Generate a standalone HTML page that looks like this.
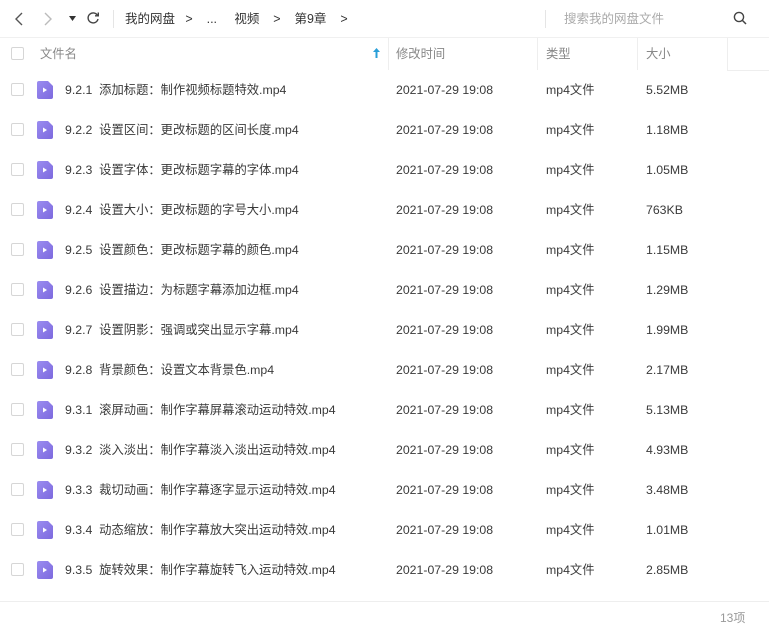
<!DOCTYPE html>
<html><head><meta charset="utf-8"><style>
*{margin:0;padding:0;box-sizing:border-box}
body{width:769px;height:634px;background:#fff;font-family:"Liberation Sans","Noto Sans CJK SC",sans-serif;color:#3a3a3a;position:relative;overflow:hidden;font-size:13px}
.a{position:absolute;white-space:nowrap;line-height:18px}
.cb{position:absolute;left:11px;width:13px;height:13px;border:1px solid #d6d6d6;border-radius:2px;background:#fff}
.ic{position:absolute;left:37px;width:16px;height:18px}
.hd{color:#888}
.sep{position:absolute;top:38px;width:1px;height:32px;background:#eee}
.fn{font-size:12.3px}
</style></head><body>
<svg class="a" style="left:13px;top:11px" width="12" height="16" viewBox="0 0 12 16"><path d="M9 2L3 8l6 6" stroke="#555" stroke-width="1.4" fill="none"/></svg>
<svg class="a" style="left:42px;top:11px" width="12" height="16" viewBox="0 0 12 16"><path d="M3 2l6 6-6 6" stroke="#bbb" stroke-width="1.4" fill="none"/></svg>
<svg class="a" style="left:69px;top:16px" width="8" height="6" viewBox="0 0 8 6"><path d="M0 0h7L3.5 5z" fill="#333"/></svg>
<svg class="a" style="left:86px;top:11px" width="14" height="14" viewBox="0 0 14 14"><path d="M11.5 4.5A5 5 0 1 0 12 8" stroke="#444" stroke-width="1.4" fill="none"/><path d="M9 4.8h3.3V1.5" stroke="#444" stroke-width="1.4" fill="none"/></svg>
<div class="a" style="left:113px;top:10px;width:1px;height:18px;background:#e5e5e5"></div>
<div class="a" style="left:125px;top:10px;color:#333;font-size:12.5px">我的网盘&nbsp;&nbsp;&nbsp;&gt;&nbsp;&nbsp;&nbsp;&nbsp;...&nbsp;&nbsp;&nbsp;&nbsp;&nbsp;视频&nbsp;&nbsp;&nbsp;&nbsp;&gt;&nbsp;&nbsp;&nbsp;&nbsp;第9章&nbsp;&nbsp;&nbsp;&nbsp;&gt;</div>
<div class="a" style="left:545px;top:10px;width:1px;height:18px;background:#e5e5e5"></div>
<div class="a" style="left:564px;top:10px;color:#aaa;font-size:12.5px">搜索我的网盘文件</div>
<svg class="a" style="left:733px;top:11px" width="15" height="15" viewBox="0 0 15 15"><circle cx="6" cy="6" r="4.6" stroke="#444" stroke-width="1.4" fill="none"/><path d="M9.5 9.5L13 13" stroke="#444" stroke-width="1.5"/></svg>
<div class="a" style="left:0;top:37px;width:769px;height:1px;background:#f0f0f0"></div>
<div class="cb" style="top:47px"></div>
<div class="a hd fn" style="left:40px;top:45px">文件名</div>
<svg class="a" style="left:372px;top:47px" width="9" height="12" viewBox="0 0 9 12"><path d="M4.5 1L1 5h2.5v6h2V5H8z" fill="#2a9fd8"/></svg>
<div class="sep" style="left:388px"></div>
<div class="a hd fn" style="left:396px;top:45px">修改时间</div>
<div class="sep" style="left:537px"></div>
<div class="a hd fn" style="left:546px;top:45px">类型</div>
<div class="sep" style="left:637px"></div>
<div class="a hd fn" style="left:646px;top:45px">大小</div>
<div class="sep" style="left:727px"></div>
<div class="a" style="left:727px;top:70px;width:42px;height:1px;background:#eee"></div>
<div id="rows"></div>
<div class="a" style="left:0;top:601px;width:769px;height:1px;background:#eee"></div>
<div class="a" style="left:720px;top:609px;color:#999;font-size:12px">13项</div>
<script>
var d=[["9.2.1  添加标题：制作视频标题特效.mp4","5.52MB"],["9.2.2  设置区间：更改标题的区间长度.mp4","1.18MB"],["9.2.3  设置字体：更改标题字幕的字体.mp4","1.05MB"],["9.2.4  设置大小：更改标题的字号大小.mp4","763KB"],["9.2.5  设置颜色：更改标题字幕的颜色.mp4","1.15MB"],["9.2.6  设置描边：为标题字幕添加边框.mp4","1.29MB"],["9.2.7  设置阴影：强调或突出显示字幕.mp4","1.99MB"],["9.2.8  背景颜色：设置文本背景色.mp4","2.17MB"],["9.3.1  滚屏动画：制作字幕屏幕滚动运动特效.mp4","5.13MB"],["9.3.2  淡入淡出：制作字幕淡入淡出运动特效.mp4","4.93MB"],["9.3.3  裁切动画：制作字幕逐字显示运动特效.mp4","3.48MB"],["9.3.4  动态缩放：制作字幕放大突出运动特效.mp4","1.01MB"],["9.3.5  旋转效果：制作字幕旋转飞入运动特效.mp4","2.85MB"]];
var h="";
d.forEach(function(r,i){var y=89+i*40;
h+='<div class="cb" style="top:'+(y-6)+'px"></div>';
h+='<svg class="ic" style="top:'+(y-8)+'px" viewBox="0 0 16 18"><defs><linearGradient id="g'+i+'" x1="0" y1="0" x2="1" y2="1"><stop offset="0" stop-color="#9a8cf0"/><stop offset="1" stop-color="#7d69de"/></linearGradient></defs><path d="M2 0h9l5 5v11a2 2 0 0 1-2 2H2a2 2 0 0 1-2-2V2a2 2 0 0 1 2-2z" fill="url(#g'+i+')"/><path d="M6 6.5v5l4-2.5z" fill="#fff"/></svg>';
h+='<div class="a fn" style="left:65px;top:'+(y-8)+'px;white-space:pre">'+r[0]+'</div>';
h+='<div class="a fn" style="left:396px;top:'+(y-8)+'px">2021-07-29 19:08</div>';
h+='<div class="a fn" style="left:546px;top:'+(y-8)+'px">mp4文件</div>';
h+='<div class="a fn" style="left:646px;top:'+(y-8)+'px">'+r[1]+'</div>';});
document.getElementById("rows").innerHTML=h;
</script>
</body></html>
